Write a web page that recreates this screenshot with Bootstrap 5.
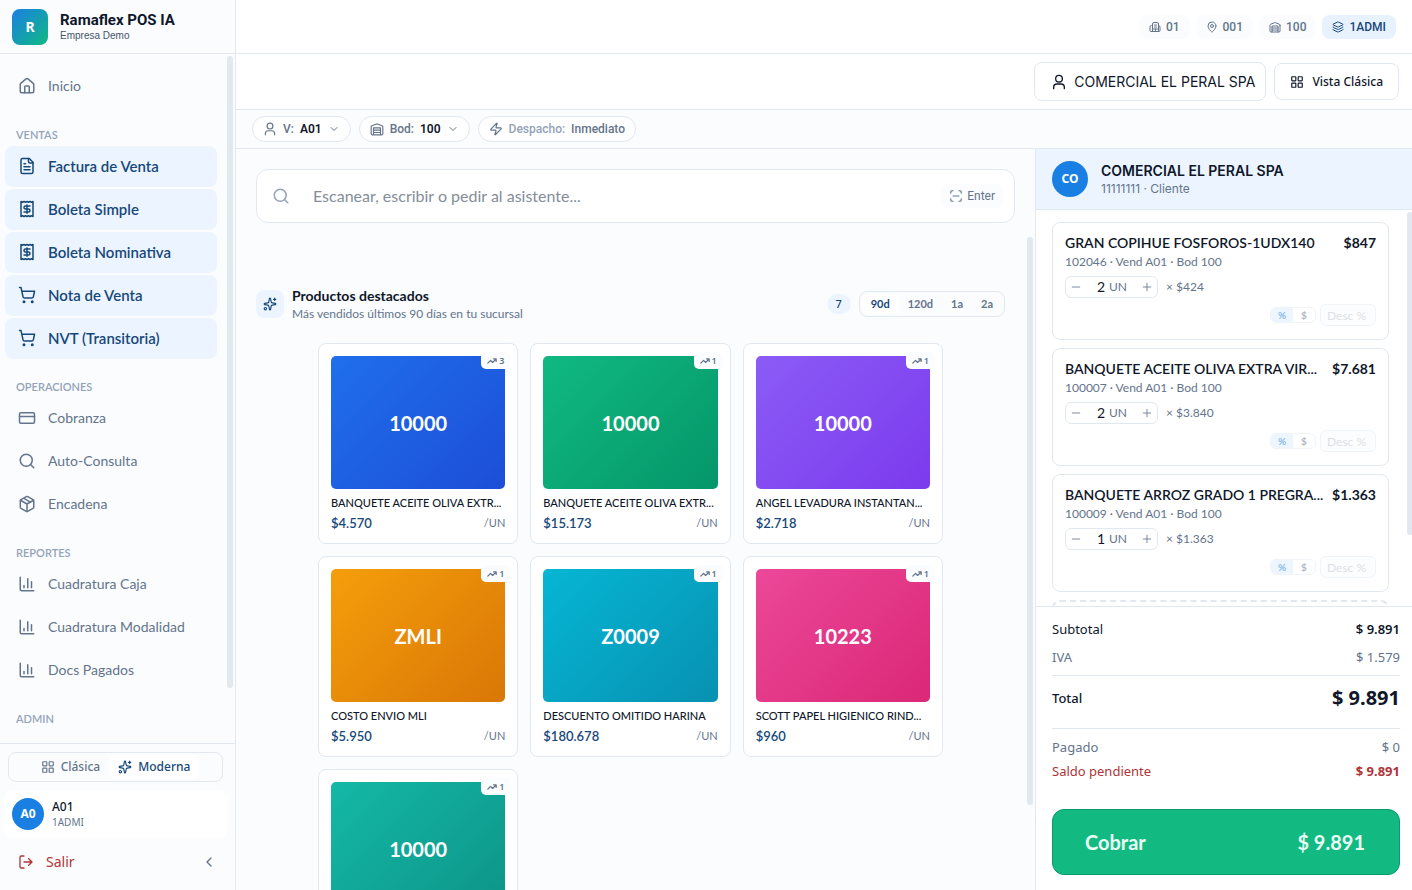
<!DOCTYPE html>
<html lang="es">
<head>
<meta charset="utf-8">
<meta name="viewport" content="width=device-width, initial-scale=1">
<title>Ramaflex POS IA</title>
<link href="https://cdn.jsdelivr.net/npm/bootstrap@5.3.0/dist/css/bootstrap.min.css" rel="stylesheet">
<style>
:root{--ink:#0f172a;--mute:#64748b;--soft:#94a3b8;--line:#e2e8f0;--bg:#fafcfe;--sky:#ecf5ff;--navy:#17487a;--blue:#1a7fe3;--red:#b03438;--green:#12b981}
body{font-family:Lato,"Liberation Sans",sans-serif;font-size:14px;line-height:20px;color:var(--ink);background:var(--bg)}
a{text-decoration:none;color:inherit}
button,input{font-family:inherit;color:inherit}
.ic{width:14px;height:14px;fill:none;stroke:currentColor;stroke-width:2;stroke-linecap:round;stroke-linejoin:round;flex:none}
.ic-lg{width:18px;height:18px}
.ic-md{width:16px;height:16px}
.ic-sm{width:12px;height:12px}
.ic-xs{width:10px;height:10px}
.ui-noto{font-family:"Noto Sans",sans-serif}
.ui-mute{color:var(--mute)}
.ui-line{border-color:var(--line)!important}
.app-shell{height:100vh}
.min-0{min-width:0;min-height:0}
.thumb{position:absolute;width:6px;border-radius:3px;background:var(--line)}
.thumb-nav{top:2px;right:2px;bottom:55px}
.thumb-main{top:88px;right:2px;bottom:85px}
.thumb-cart{top:2px;right:-1px;bottom:71px}

.side{width:236px;border-right:1px solid var(--line)}
.brand-row,.topbar{height:54px;border-bottom:1px solid var(--line)}
.logo{width:36px;height:36px;border-radius:8px;background:linear-gradient(135deg,#1a80e4,#10b981);color:#fff;font:700 14px/36px "Noto Sans",sans-serif;text-align:center}
.brand-name{font:700 15px/18px Roboto,sans-serif}
.brand-sub{font:400 10px/14px "Liberation Sans",sans-serif;color:#475569}
.side-nav{padding:12px 18px 0 5px}
.side-nav a{display:flex;align-items:center;gap:12px;height:41px;padding:0 13px 1px;margin-bottom:2px;border-radius:8px;color:var(--mute)}
.side-nav a.on{background:var(--sky);color:var(--navy);font-weight:600;font-size:15px}
.side-nav h2{font-size:11px;line-height:14px;font-weight:600;color:var(--soft);margin:0;padding:19px 11px 4px}
.side-foot{border-top:1px solid var(--line);padding:8px 8px 10px 4px}
.seg{border:1px solid var(--line);border-radius:8px;background:var(--bg);padding:2px}
.seg button{border:0;background:none;border-radius:6px;color:var(--mute);font-weight:700;font-size:11px;line-height:20px;padding:0 9px}
.seg button.on{background:#fff;color:var(--navy)}
.mode-seg{margin:0 4px}
.mode-seg button{font:500 12px/24px "Noto Sans",sans-serif;display:flex;align-items:center;gap:6px}
.disc{border-radius:50%;background:var(--blue);color:#fff;font:700 12px/32px "Noto Sans",sans-serif;width:32px;height:32px;text-align:center;flex:none}
.disc-lg{width:36px;height:36px;line-height:36px}
.user-card{background:#fff;border-radius:8px;padding:8px;height:48px;margin-top:8px}
.user-name{font-size:12px;line-height:16px;font-weight:500}
.user-role{font-size:10px;line-height:14px;color:var(--mute)}
.exit-row{padding:8px 10px 8px 14px;margin-top:6px}
.exit-row a{color:var(--red);gap:12px}

.topbar{gap:6px}
.chip{display:flex;align-items:center;gap:5px;height:24px;border-radius:8px;padding:0 10px;background:var(--bg);color:var(--mute);font:500 12px/24px Roboto,sans-serif}
.chip.on{background:#e8f2fe;color:var(--navy)}
.actions{height:56px;border-bottom:1px solid var(--line);padding:0 13px}
.box-btn{display:flex;align-items:center;border:1px solid var(--line);border-radius:8px;background:#fff}
.client-btn{height:39px;padding:0 10px 0 16px;gap:7px;font:400 14px/20px Inter,sans-serif}
.view-btn{height:37px;padding:0 15px;gap:8px;font:500 12px/20px "Noto Sans",sans-serif}
.filters{height:39px;border-bottom:1px solid var(--line);padding:0 16px}
.pill{display:flex;align-items:center;gap:6px;height:26px;border:1px solid var(--line);border-radius:13px;background:#fff;padding:0 10px;color:var(--mute);font:500 12px/24px Roboto,sans-serif}
.pill b{font-weight:600;color:var(--ink)}
.pill .plain{color:var(--mute);font-weight:500}
.pill.dim{color:var(--soft)}

.catalog{padding:20px 20px 0;background:var(--bg)}
.find{height:54px;border:1px solid var(--line);border-radius:12px;background:#fff;padding:0 11px 0 15px}
.find .ic-lg{color:var(--soft)}
.find input{border:0;outline:0;background:none;font-size:16px;margin-left:23px;padding:0}
.find input::placeholder{color:#858d98;opacity:1}
.key{height:24px;border-radius:6px;background:var(--bg);color:var(--mute);font:400 12px/24px Roboto,sans-serif;padding:0 8px;gap:4px}
.feat{margin:63px 10px 0 0}
.feat-ic{width:28px;height:28px;border-radius:8px;background:var(--sky);color:var(--navy)}
.feat h1{font-size:14px;line-height:20px;font-weight:700;margin:0}
.feat p{font-size:12px;line-height:16px;margin:0;color:var(--mute)}
.count{width:24px;height:20px;border-radius:10px;background:var(--sky);color:var(--navy);font:500 11px/20px "Noto Sans",sans-serif;text-align:center}
.tiles{display:grid;grid-template-columns:repeat(3,1fr);gap:12px;max-width:625px;margin:21px auto 0}
.tiles-wrap{padding-right:10px}
.tile{position:relative;border:1px solid var(--line);border-radius:8px;background:#fff;padding:12px 12px 9px;text-align:left;display:block;width:100%;min-width:0}
.tile .pic{display:flex;align-items:center;justify-content:center;height:133px;border-radius:5px;color:#fff;font-weight:700;font-size:20px}
.tile .nm{display:block;font-size:11px;line-height:18px;font-weight:500;margin-top:5px;white-space:nowrap}
.tile .pr{font-size:13px;font-weight:600;line-height:22px;color:var(--navy)}
.tile .un{font-size:11px;line-height:22px;color:var(--mute)}
.rank{position:absolute;top:8px;right:7px;height:17px;padding:0 6px;border-radius:5px;background:var(--bg);color:var(--mute);font:600 9px/17px "Noto Sans",sans-serif;display:flex;align-items:center;gap:2px}
.g1{background:linear-gradient(135deg,#1f6feb,#1d4ed8)}
.g2{background:linear-gradient(135deg,#10b981,#059669)}
.g3{background:linear-gradient(135deg,#8b5cf6,#7c3aed)}
.g4{background:linear-gradient(135deg,#f59e0b,#d97706)}
.g5{background:linear-gradient(135deg,#06b6d4,#0891b2)}
.g6{background:linear-gradient(135deg,#ec4899,#db2777)}
.g7{background:linear-gradient(135deg,#14b8a6,#0d9488)}

.cart{width:377px;border-left:1px solid var(--line);background:#fff}
.cart-head{background:var(--sky);border-bottom:1px solid var(--line);height:61px;padding:0 16px;gap:13px}
.cart-head strong{display:block;font:600 14px/20px Inter,sans-serif}
.cart-head small{display:block;font:400 12px/16px Inter,sans-serif;color:var(--mute)}
.cart-list{padding:12px 23px 0 16px}
.line-item{border:1px solid var(--line);border-radius:8px;padding:10px 12px 0;margin-bottom:8px;height:118px}
.line-item .nm{font-size:14px;font-weight:600;white-space:nowrap}
.line-item .amt{font-size:14px;font-weight:700;flex:none}
.line-item .meta{font-size:12px;line-height:18px;color:var(--mute)}
.qty-row{margin-top:5px;gap:8px}
.disc-row{margin-top:6px;gap:4px;opacity:.5}
.qty{width:93px;height:22px;border:1px solid var(--line);border-radius:6px;color:var(--mute);font-size:12px;line-height:20px}
.qty button{border:0;background:none;width:20px;height:20px;padding:0;display:flex;align-items:center;justify-content:center}
.qty input{width:19px;border:0;padding:0;background:none;text-align:right;color:var(--ink);font:400 14px/20px Lato,sans-serif}
.disc-seg{height:16px;border:1px solid var(--line);border-radius:6px;overflow:hidden}
.disc-seg button{border:0;background:#fff;padding:0;width:22px;font-size:10px;line-height:14px;font-weight:700;color:var(--mute)}
.disc-seg button.on{background:#dcecff;color:#0b74d8}
.disc-in{width:56px;height:22px;border:1px solid var(--line);border-radius:6px;background:var(--bg);padding:0 6px;font-size:12px}
.disc-in::placeholder{color:#b9c2cf;opacity:1}
.ghost-item{border:2px dashed var(--line);border-radius:8px;height:60px}
.sums{border-top:1px solid var(--line);padding:12px 12px 15px 16px;font:400 13px/20px "Noto Sans",sans-serif}
.sums dl,.sums dd{margin:0}
.sums dt{font-weight:inherit}
.sum-row{display:flex;justify-content:space-between;align-items:center}
.sum-total{height:54px;padding-bottom:8px;font-weight:500}
.sum-total dd{font-size:20px;font-weight:700}
.sum-due{color:var(--red)}
.sum-due dd{font-weight:700}
.pay{width:100%;height:66px;background:var(--green);border:1px solid #0c9a69;border-radius:12px;color:#e9fff6;font:700 20px/24px Lato,sans-serif;padding:0 34px 0 32px;margin-top:28px}
</style>
</head>
<body class="overflow-hidden">
<svg class="d-none" aria-hidden="true">
<symbol id="home" viewBox="0 0 24 24"><path d="M15 21v-8a1 1 0 0 0-1-1h-4a1 1 0 0 0-1 1v8"/><path d="M3 10a2 2 0 0 1 .709-1.528l7-5.999a2 2 0 0 1 2.582 0l7 5.999A2 2 0 0 1 21 10v9a2 2 0 0 1-2 2H5a2 2 0 0 1-2-2z"/></symbol>
<symbol id="file" viewBox="0 0 24 24"><path d="M15 2H6a2 2 0 0 0-2 2v16a2 2 0 0 0 2 2h12a2 2 0 0 0 2-2V7Z"/><path d="M14 2v4a2 2 0 0 0 2 2h4M10 9H8M16 13H8M16 17H8"/></symbol>
<symbol id="receipt" viewBox="0 0 24 24"><path d="M4 2v20l2-1 2 1 2-1 2 1 2-1 2 1 2-1 2 1V2l-2 1-2-1-2 1-2-1-2 1-2-1-2 1Z"/><path d="M16 8h-6a2 2 0 1 0 0 4h4a2 2 0 1 1 0 4H8M12 17.500V6.500"/></symbol>
<symbol id="trolley" viewBox="0 0 24 24"><circle cx="8" cy="21" r="1"/><circle cx="19" cy="21" r="1"/><path d="M2.050 2.050h2l2.660 12.420a2 2 0 0 0 2 1.580h9.780a2 2 0 0 0 1.950-1.570l1.650-7.430H5.120"/></symbol>
<symbol id="credit" viewBox="0 0 24 24"><rect x="2" y="5" width="20" height="14" rx="2"/><path d="M2 10h20"/></symbol>
<symbol id="search" viewBox="0 0 24 24"><circle cx="11" cy="11" r="8"/><path d="m21 21-4.300-4.300"/></symbol>
<symbol id="package" viewBox="0 0 24 24"><path d="m7.500 4.270 9 5.150M21 8a2 2 0 0 0-1-1.730l-7-4a2 2 0 0 0-2 0l-7 4A2 2 0 0 0 3 8v8a2 2 0 0 0 1 1.730l7 4a2 2 0 0 0 2 0l7-4A2 2 0 0 0 21 16Z"/><path d="m3.300 7 8.700 5 8.700-5M12 22V12"/></symbol>
<symbol id="chart" viewBox="0 0 24 24"><path d="M3 3v16a2 2 0 0 0 2 2h16M18 17V9M13 17V5M8 17v-3"/></symbol>
<symbol id="squares" viewBox="0 0 24 24"><rect x="3" y="3" width="7" height="7" rx="1"/><rect x="14" y="3" width="7" height="7" rx="1"/><rect x="14" y="14" width="7" height="7" rx="1"/><rect x="3" y="14" width="7" height="7" rx="1"/></symbol>
<symbol id="sparkles" viewBox="0 0 24 24"><path d="M11.017 2.814a1 1 0 0 1 1.966 0l1.051 5.558a2 2 0 0 0 1.594 1.594l5.558 1.051a1 1 0 0 1 0 1.966l-5.558 1.051a2 2 0 0 0-1.594 1.594l-1.051 5.558a1 1 0 0 1-1.966 0l-1.051-5.558a2 2 0 0 0-1.594-1.594l-5.558-1.051a1 1 0 0 1 0-1.966l5.558-1.051a2 2 0 0 0 1.594-1.594zM20 2v4M22 4h-4"/><circle cx="4" cy="20" r="2"/></symbol>
<symbol id="logout" viewBox="0 0 24 24"><path d="M9 21H5a2 2 0 0 1-2-2V5a2 2 0 0 1 2-2h4M16 17l5-5-5-5M21 12H9"/></symbol>
<symbol id="left" viewBox="0 0 24 24"><path d="m15 18-6-6 6-6"/></symbol>
<symbol id="down" viewBox="0 0 24 24"><path d="m6 9 6 6 6-6"/></symbol>
<symbol id="building" viewBox="0 0 24 24"><path d="M7 21V6a3 3 0 0 1 3-3h6a3 3 0 0 1 3 3v15M7 9H5a3 3 0 0 0-3 3v7a2 2 0 0 0 2 2h16a2 2 0 0 0 2-2v-7a3 3 0 0 0-3-3M11 8h4M11 12h4M7 16h12M13 16v5"/></symbol>
<symbol id="pin" viewBox="0 0 24 24"><path d="M20 10c0 5-5.500 10.200-7.400 11.800a1 1 0 0 1-1.200 0C9.500 20.200 4 15 4 10a8 8 0 0 1 16 0"/><circle cx="12" cy="10" r="3"/></symbol>
<symbol id="store" viewBox="0 0 24 24"><path d="M22 8.350V20a2 2 0 0 1-2 2H4a2 2 0 0 1-2-2V8.350A2 2 0 0 1 3.260 6.500l8-3.200a2 2 0 0 1 1.480 0l8 3.200A2 2 0 0 1 22 8.350ZM6 18h12M6 14h12M6 22V10h12v12"/></symbol>
<symbol id="layers" viewBox="0 0 24 24"><path d="M12.830 2.180a2 2 0 0 0-1.660 0L2.600 6.080a1 1 0 0 0 0 1.830l8.580 3.910a2 2 0 0 0 1.660 0l8.580-3.900a1 1 0 0 0 0-1.830ZM2 12a1 1 0 0 0 .600.900l8.600 3.900a2 2 0 0 0 1.600 0l8.600-3.900a1 1 0 0 0 .600-.900M2 17a1 1 0 0 0 .600.900l8.600 3.900a2 2 0 0 0 1.600 0l8.600-3.900a1 1 0 0 0 .600-.900"/></symbol>
<symbol id="user" viewBox="0 0 24 24"><circle cx="12" cy="7" r="5"/><path d="M4 22v-2a5 5 0 0 1 5-5h6a5 5 0 0 1 5 5v2"/></symbol>
<symbol id="zap" viewBox="0 0 24 24"><path d="M4 14a1 1 0 0 1-.780-1.630l9.900-10.200a.5.5 0 0 1 .860.460l-1.920 6.020A1 1 0 0 0 13 10h7a1 1 0 0 1 .780 1.630l-9.900 10.200a.5.5 0 0 1-.860-.460l1.920-6.020A1 1 0 0 0 11 14z"/></symbol>
<symbol id="scan" viewBox="0 0 24 24"><path d="M3 7V5a2 2 0 0 1 2-2h2M17 3h2a2 2 0 0 1 2 2v2M21 17v2a2 2 0 0 1-2 2h-2M7 21H5a2 2 0 0 1-2-2v-2M7 12h10"/></symbol>
<symbol id="trend" viewBox="0 0 24 24"><path stroke-width="3" d="M16 7h6v6M22 7l-8.500 8.500-5-5L2 17"/></symbol>
<symbol id="minus" viewBox="0 0 24 24"><path d="M3 12h18"/></symbol>
<symbol id="plus" viewBox="0 0 24 24"><path d="M3 12h18M12 3v18"/></symbol>
</svg>

<div class="app-shell d-flex">
  <aside class="side d-flex flex-column flex-shrink-0">
    <div class="brand-row d-flex align-items-center px-2 flex-shrink-0">
      <div class="logo ms-1 me-2">R</div>
      <div class="ps-1"><div class="brand-name">Ramaflex POS IA</div><div class="brand-sub">Empresa Demo</div></div>
    </div>
    <div class="position-relative flex-grow-1 overflow-hidden">
      <nav class="side-nav" aria-label="Principal">
        <a href="#"><svg class="ic ic-lg"><use href="#home"/></svg>Inicio</a>
        <h2>VENTAS</h2>
        <a class="on" href="#"><svg class="ic ic-lg"><use href="#file"/></svg>Factura de Venta</a>
        <a class="on" href="#"><svg class="ic ic-lg"><use href="#receipt"/></svg>Boleta Simple</a>
        <a class="on" href="#"><svg class="ic ic-lg"><use href="#receipt"/></svg>Boleta Nominativa</a>
        <a class="on" href="#"><svg class="ic ic-lg"><use href="#trolley"/></svg>Nota de Venta</a>
        <a class="on" href="#"><svg class="ic ic-lg"><use href="#trolley"/></svg>NVT (Transitoria)</a>
        <h2>OPERACIONES</h2>
        <a href="#"><svg class="ic ic-lg"><use href="#credit"/></svg>Cobranza</a>
        <a href="#"><svg class="ic ic-lg"><use href="#search"/></svg>Auto-Consulta</a>
        <a href="#"><svg class="ic ic-lg"><use href="#package"/></svg>Encadena</a>
        <h2>REPORTES</h2>
        <a href="#"><svg class="ic ic-lg"><use href="#chart"/></svg>Cuadratura Caja</a>
        <a href="#"><svg class="ic ic-lg"><use href="#chart"/></svg>Cuadratura Modalidad</a>
        <a href="#"><svg class="ic ic-lg"><use href="#chart"/></svg>Docs Pagados</a>
        <h2>ADMIN</h2>
      </nav>
      <div class="thumb thumb-nav"></div>
    </div>
    <div class="side-foot flex-shrink-0">
      <div class="seg mode-seg d-flex justify-content-center">
        <button type="button"><svg class="ic"><use href="#squares"/></svg>Clásica</button>
        <button type="button" class="on"><svg class="ic"><use href="#sparkles"/></svg>Moderna</button>
      </div>
      <div class="user-card d-flex align-items-center gap-2">
        <div class="disc">A0</div>
        <div class="ui-noto"><div class="user-name">A01</div><div class="user-role">1ADMI</div></div>
      </div>
      <div class="exit-row d-flex align-items-center justify-content-between">
        <a href="#" class="ui-noto d-flex align-items-center"><svg class="ic ic-md"><use href="#logout"/></svg>Salir</a>
        <button type="button" class="btn p-0 border-0 ui-mute d-flex" aria-label="Contraer menú"><svg class="ic ic-md"><use href="#left"/></svg></button>
      </div>
    </div>
  </aside>

  <div class="d-flex flex-column flex-grow-1 min-0">
    <header class="topbar bg-white d-flex align-items-center justify-content-end px-3 flex-shrink-0">
      <span class="chip"><svg class="ic ic-sm"><use href="#building"/></svg>01</span>
      <span class="chip"><svg class="ic ic-sm"><use href="#pin"/></svg>001</span>
      <span class="chip"><svg class="ic ic-sm"><use href="#store"/></svg>100</span>
      <span class="chip on"><svg class="ic ic-sm"><use href="#layers"/></svg>1ADMI</span>
    </header>
    <div class="actions bg-white d-flex align-items-center justify-content-end gap-2 flex-shrink-0">
      <button type="button" class="box-btn client-btn"><svg class="ic ic-md"><use href="#user"/></svg>COMERCIAL EL PERAL SPA</button>
      <button type="button" class="box-btn view-btn"><svg class="ic"><use href="#squares"/></svg>Vista Clásica</button>
    </div>
    <div class="filters d-flex align-items-center gap-2 flex-shrink-0">
      <button type="button" class="pill"><svg class="ic"><use href="#user"/></svg>V: <b>A01</b><svg class="ic ic-sm"><use href="#down"/></svg></button>
      <button type="button" class="pill"><svg class="ic"><use href="#store"/></svg>Bod: <b>100</b><svg class="ic ic-sm"><use href="#down"/></svg></button>
      <button type="button" class="pill dim"><svg class="ic ui-mute"><use href="#zap"/></svg>Despacho: <b class="plain">Inmediato</b></button>
    </div>

    <div class="d-flex flex-grow-1 min-0">
      <main class="catalog flex-grow-1 position-relative overflow-hidden">
        <div class="find d-flex align-items-center">
          <svg class="ic ic-lg"><use href="#search"/></svg>
          <input class="flex-grow-1" type="text" aria-label="Buscar productos" placeholder="Escanear, escribir o pedir al asistente...">
          <span class="key d-flex align-items-center"><svg class="ic"><use href="#scan"/></svg>Enter</span>
        </div>
        <div class="feat d-flex align-items-center">
          <span class="feat-ic d-flex align-items-center justify-content-center me-2"><svg class="ic"><use href="#sparkles"/></svg></span>
          <div class="flex-grow-1"><h1>Productos destacados</h1><p>Más vendidos últimos 90 días en tu sucursal</p></div>
          <span class="count me-2">7</span>
          <div class="seg d-flex" role="group" aria-label="Periodo">
            <button type="button" class="on">90d</button><button type="button">120d</button><button type="button">1a</button><button type="button">2a</button>
          </div>
        </div>
        <div class="tiles-wrap"><div class="tiles">
          <button type="button" class="tile"><span class="pic g1">10000</span><span class="rank"><svg class="ic ic-xs"><use href="#trend"/></svg>3</span><span class="nm">BANQUETE ACEITE OLIVA EXTR...</span><span class="d-flex justify-content-between"><span class="pr">$4.570</span><span class="un">/UN</span></span></button>
          <button type="button" class="tile"><span class="pic g2">10000</span><span class="rank"><svg class="ic ic-xs"><use href="#trend"/></svg>1</span><span class="nm">BANQUETE ACEITE OLIVA EXTR...</span><span class="d-flex justify-content-between"><span class="pr">$15.173</span><span class="un">/UN</span></span></button>
          <button type="button" class="tile"><span class="pic g3">10000</span><span class="rank"><svg class="ic ic-xs"><use href="#trend"/></svg>1</span><span class="nm">ANGEL LEVADURA INSTANTAN...</span><span class="d-flex justify-content-between"><span class="pr">$2.718</span><span class="un">/UN</span></span></button>
          <button type="button" class="tile"><span class="pic g4">ZMLI</span><span class="rank"><svg class="ic ic-xs"><use href="#trend"/></svg>1</span><span class="nm">COSTO ENVIO MLI</span><span class="d-flex justify-content-between"><span class="pr">$5.950</span><span class="un">/UN</span></span></button>
          <button type="button" class="tile"><span class="pic g5">Z0009</span><span class="rank"><svg class="ic ic-xs"><use href="#trend"/></svg>1</span><span class="nm">DESCUENTO OMITIDO HARINA</span><span class="d-flex justify-content-between"><span class="pr">$180.678</span><span class="un">/UN</span></span></button>
          <button type="button" class="tile"><span class="pic g6">10223</span><span class="rank"><svg class="ic ic-xs"><use href="#trend"/></svg>1</span><span class="nm">SCOTT PAPEL HIGIENICO RIND...</span><span class="d-flex justify-content-between"><span class="pr">$960</span><span class="un">/UN</span></span></button>
          <button type="button" class="tile"><span class="pic g7">10000</span><span class="rank"><svg class="ic ic-xs"><use href="#trend"/></svg>1</span></button>
        </div></div>
        <div class="thumb thumb-main"></div>
      </main>

      <aside class="cart d-flex flex-column flex-shrink-0">
        <div class="cart-head d-flex align-items-center flex-shrink-0">
          <div class="disc disc-lg">CO</div>
          <div><strong>COMERCIAL EL PERAL SPA</strong><small>11111111 · Cliente</small></div>
        </div>
        <div class="position-relative flex-grow-1 overflow-hidden">
          <div class="cart-list">
            <div class="line-item">
              <div class="d-flex justify-content-between"><span class="nm">GRAN COPIHUE FOSFOROS-1UDX140</span><span class="amt">$847</span></div>
              <div class="meta">102046 · Vend A01 · Bod 100</div>
              <div class="qty-row d-flex align-items-center"><div class="qty d-flex align-items-center"><button type="button" aria-label="Menos"><svg class="ic ic-xs"><use href="#minus"/></svg></button><input aria-label="Cantidad" value="2"><span class="ms-1 me-auto">UN</span><button type="button" aria-label="Más"><svg class="ic ic-xs"><use href="#plus"/></svg></button></div><span class="meta">× $424</span></div>
              <div class="disc-row d-flex align-items-center justify-content-end"><div class="disc-seg d-flex"><button type="button" class="on">%</button><button type="button">$</button></div><input class="disc-in" aria-label="Descuento" placeholder="Desc %"></div>
            </div>
            <div class="line-item">
              <div class="d-flex justify-content-between"><span class="nm">BANQUETE ACEITE OLIVA EXTRA VIR...</span><span class="amt">$7.681</span></div>
              <div class="meta">100007 · Vend A01 · Bod 100</div>
              <div class="qty-row d-flex align-items-center"><div class="qty d-flex align-items-center"><button type="button" aria-label="Menos"><svg class="ic ic-xs"><use href="#minus"/></svg></button><input aria-label="Cantidad" value="2"><span class="ms-1 me-auto">UN</span><button type="button" aria-label="Más"><svg class="ic ic-xs"><use href="#plus"/></svg></button></div><span class="meta">× $3.840</span></div>
              <div class="disc-row d-flex align-items-center justify-content-end"><div class="disc-seg d-flex"><button type="button" class="on">%</button><button type="button">$</button></div><input class="disc-in" aria-label="Descuento" placeholder="Desc %"></div>
            </div>
            <div class="line-item">
              <div class="d-flex justify-content-between"><span class="nm">BANQUETE ARROZ GRADO 1 PREGRA...</span><span class="amt">$1.363</span></div>
              <div class="meta">100009 · Vend A01 · Bod 100</div>
              <div class="qty-row d-flex align-items-center"><div class="qty d-flex align-items-center"><button type="button" aria-label="Menos"><svg class="ic ic-xs"><use href="#minus"/></svg></button><input aria-label="Cantidad" value="1"><span class="ms-1 me-auto">UN</span><button type="button" aria-label="Más"><svg class="ic ic-xs"><use href="#plus"/></svg></button></div><span class="meta">× $1.363</span></div>
              <div class="disc-row d-flex align-items-center justify-content-end"><div class="disc-seg d-flex"><button type="button" class="on">%</button><button type="button">$</button></div><input class="disc-in" aria-label="Descuento" placeholder="Desc %"></div>
            </div>
            <div class="ghost-item"></div>
          </div>
          <div class="thumb thumb-cart"></div>
        </div>
        <div class="sums flex-shrink-0">
          <dl>
            <div class="sum-row"><dt>Subtotal</dt><dd class="fw-semibold">$ 9.891</dd></div>
            <div class="sum-row ui-mute mt-2"><dt>IVA</dt><dd>$ 1.579</dd></div>
            <div class="sum-row sum-total border-top border-bottom ui-line mt-2"><dt>Total</dt><dd>$ 9.891</dd></div>
            <div class="sum-row ui-mute mt-2"><dt>Pagado</dt><dd>$ 0</dd></div>
            <div class="sum-row sum-due mt-1"><dt>Saldo pendiente</dt><dd>$ 9.891</dd></div>
          </dl>
          <button type="button" class="pay d-flex align-items-center justify-content-between"><span>Cobrar</span><span>$ 9.891</span></button>
        </div>
      </aside>
    </div>
  </div>
</div>
<script src="https://cdn.jsdelivr.net/npm/bootstrap@5.3.0/dist/js/bootstrap.bundle.min.js"></script>
</body>
</html>
